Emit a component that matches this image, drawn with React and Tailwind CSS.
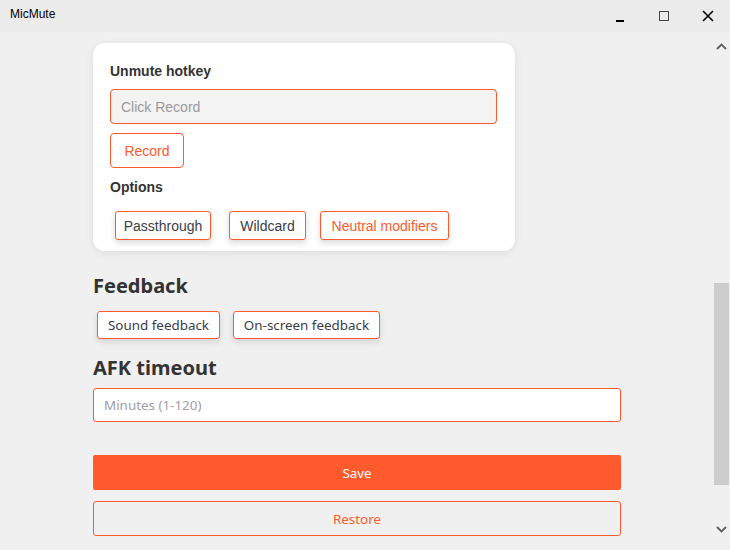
import React from "react";

const orange = "border-[#ff5a2e]";

function Chip({ label, width, active }) {
  return (
    <button
      className={`h-[29px] rounded-[3px] border ${orange} bg-white pt-[1px] text-[14px] shadow-[0_3px_6px_rgba(0,0,0,0.15)] ${width} ${
        active ? "text-[#ff5a2e]" : "text-[#3c3c48]"
      }`}
    >
      {label}
    </button>
  );
}

export default function App() {
  return (
    <div className="flex h-[550px] w-[730px] flex-col overflow-hidden bg-[#f0f0f0] text-[#333] [font-family:'Noto_Sans',sans-serif]">
      {/* title bar */}
      <div className="flex h-[32px] shrink-0 items-start justify-between bg-[#ebebeb]">
        <span className="pl-[10px] pt-[5px] text-[12px] text-black [font-family:'Liberation_Sans',sans-serif]">MicMute</span>
        <div className="flex items-center pt-[10px]">
          <div className="flex w-[44px] justify-center pt-[9px]">
            <div className="h-[2px] w-[8px] bg-black" />
          </div>
          <div className="flex w-[44px] justify-center">
            <div className="h-[10px] w-[10px] border border-[#444]" />
          </div>
          <div className="flex w-[44px] justify-center">
            <svg width="12" height="12" viewBox="0 0 12 12">
              <path d="M1 1L11 11M11 1L1 11" stroke="#000" strokeWidth="1.6" />
            </svg>
          </div>
        </div>
      </div>

      <div className="flex flex-1">
        <main className="w-[712px] pl-[93px]">
          {/* hotkey card */}
          <div className="mt-[11px] w-[422px] rounded-[12px] bg-white px-[17px] pb-[11px] pt-[20px] shadow-[0_2px_8px_rgba(0,0,0,0.08)] [font-family:'Liberation_Sans',sans-serif]">
            <div className="text-[14px] font-bold leading-[17px] text-[#333]">Unmute hotkey</div>
            <div className={`mt-[9px] flex h-[35px] w-[387px] items-center rounded-[4px] border ${orange} bg-[#f3f3f3] px-[10px] pt-[2px] text-[14px] text-[#999]`}>
              Click Record
            </div>
            <button className={`mt-[9px] h-[35px] w-[74px] rounded-[4px] border ${orange} bg-white pt-[2px] text-[14px] text-[#ff5a2e]`}>
              Record
            </button>
            <div className="mt-[11px] text-[14px] font-bold leading-[17px] text-[#333]">Options</div>
            <div className="ml-[5px] mt-[15px] flex">
              <Chip label="Passthrough" width="w-[96px]" />
              <div className="ml-[18px]">
                <Chip label="Wildcard" width="w-[77px]" />
              </div>
              <div className="ml-[14px]">
                <Chip label="Neutral modifiers" width="w-[129px]" active />
              </div>
            </div>
          </div>

          <h2 className="mt-[21px] text-[20px] font-bold leading-[28px] text-[#333]">Feedback</h2>
          <div className="ml-[4px] mt-[11px] flex gap-[13px]">
            <button className={`h-[28px] w-[123px] rounded-[3px] border ${orange} bg-white pt-[1px] text-[13.4px] text-[#3c3c48] shadow-[0_3px_6px_rgba(0,0,0,0.12)]`}>
              Sound feedback
            </button>
            <button className={`h-[28px] w-[147px] rounded-[3px] border ${orange} bg-white pt-[1px] text-[13.4px] text-[#3c3c48] shadow-[0_3px_6px_rgba(0,0,0,0.12)]`}>
              On-screen feedback
            </button>
          </div>

          <h2 className="mt-[15px] text-[20px] font-bold leading-[28px] text-[#333]">AFK timeout</h2>
          <div className={`mt-[6px] flex h-[34px] w-[528px] items-center rounded-[3px] border ${orange} bg-white px-[10px] pt-[1px] text-[13.4px] text-[#a0a0a8]`}>
            Minutes (1-120)
          </div>

          <button className="mt-[33px] block h-[35px] w-[528px] rounded-[2px] bg-[#ff5a2e] pt-[2px] text-[13.4px] text-white">
            Save
          </button>
          <button className={`mt-[11px] block h-[35px] w-[528px] rounded-[3px] border ${orange} bg-transparent pt-[1px] text-[13.4px] text-[#ff5a2e]`}>
            Restore
          </button>
        </main>

        {/* scrollbar */}
        <div className="flex w-[18px] flex-col items-center bg-[#f0f0f0]">
          <div className="flex h-[28px] w-full items-center justify-center">
            <svg width="11" height="7" viewBox="0 0 11 7">
              <path d="M1 6L5.5 1.5L10 6" stroke="#606060" strokeWidth="1.8" fill="none" />
            </svg>
          </div>
          <div className="flex w-full flex-1 flex-col pt-[223px] pb-[33px]">
            <div className="ml-[2px] h-[202px] w-[15px] bg-[#cdcdcd]" />
          </div>
          <div className="flex h-[24px] w-full items-start justify-center">
            <svg width="11" height="7" viewBox="0 0 11 7">
              <path d="M1 1L5.5 5.5L10 1" stroke="#606060" strokeWidth="1.8" fill="none" />
            </svg>
          </div>
        </div>
      </div>
    </div>
  );
}
